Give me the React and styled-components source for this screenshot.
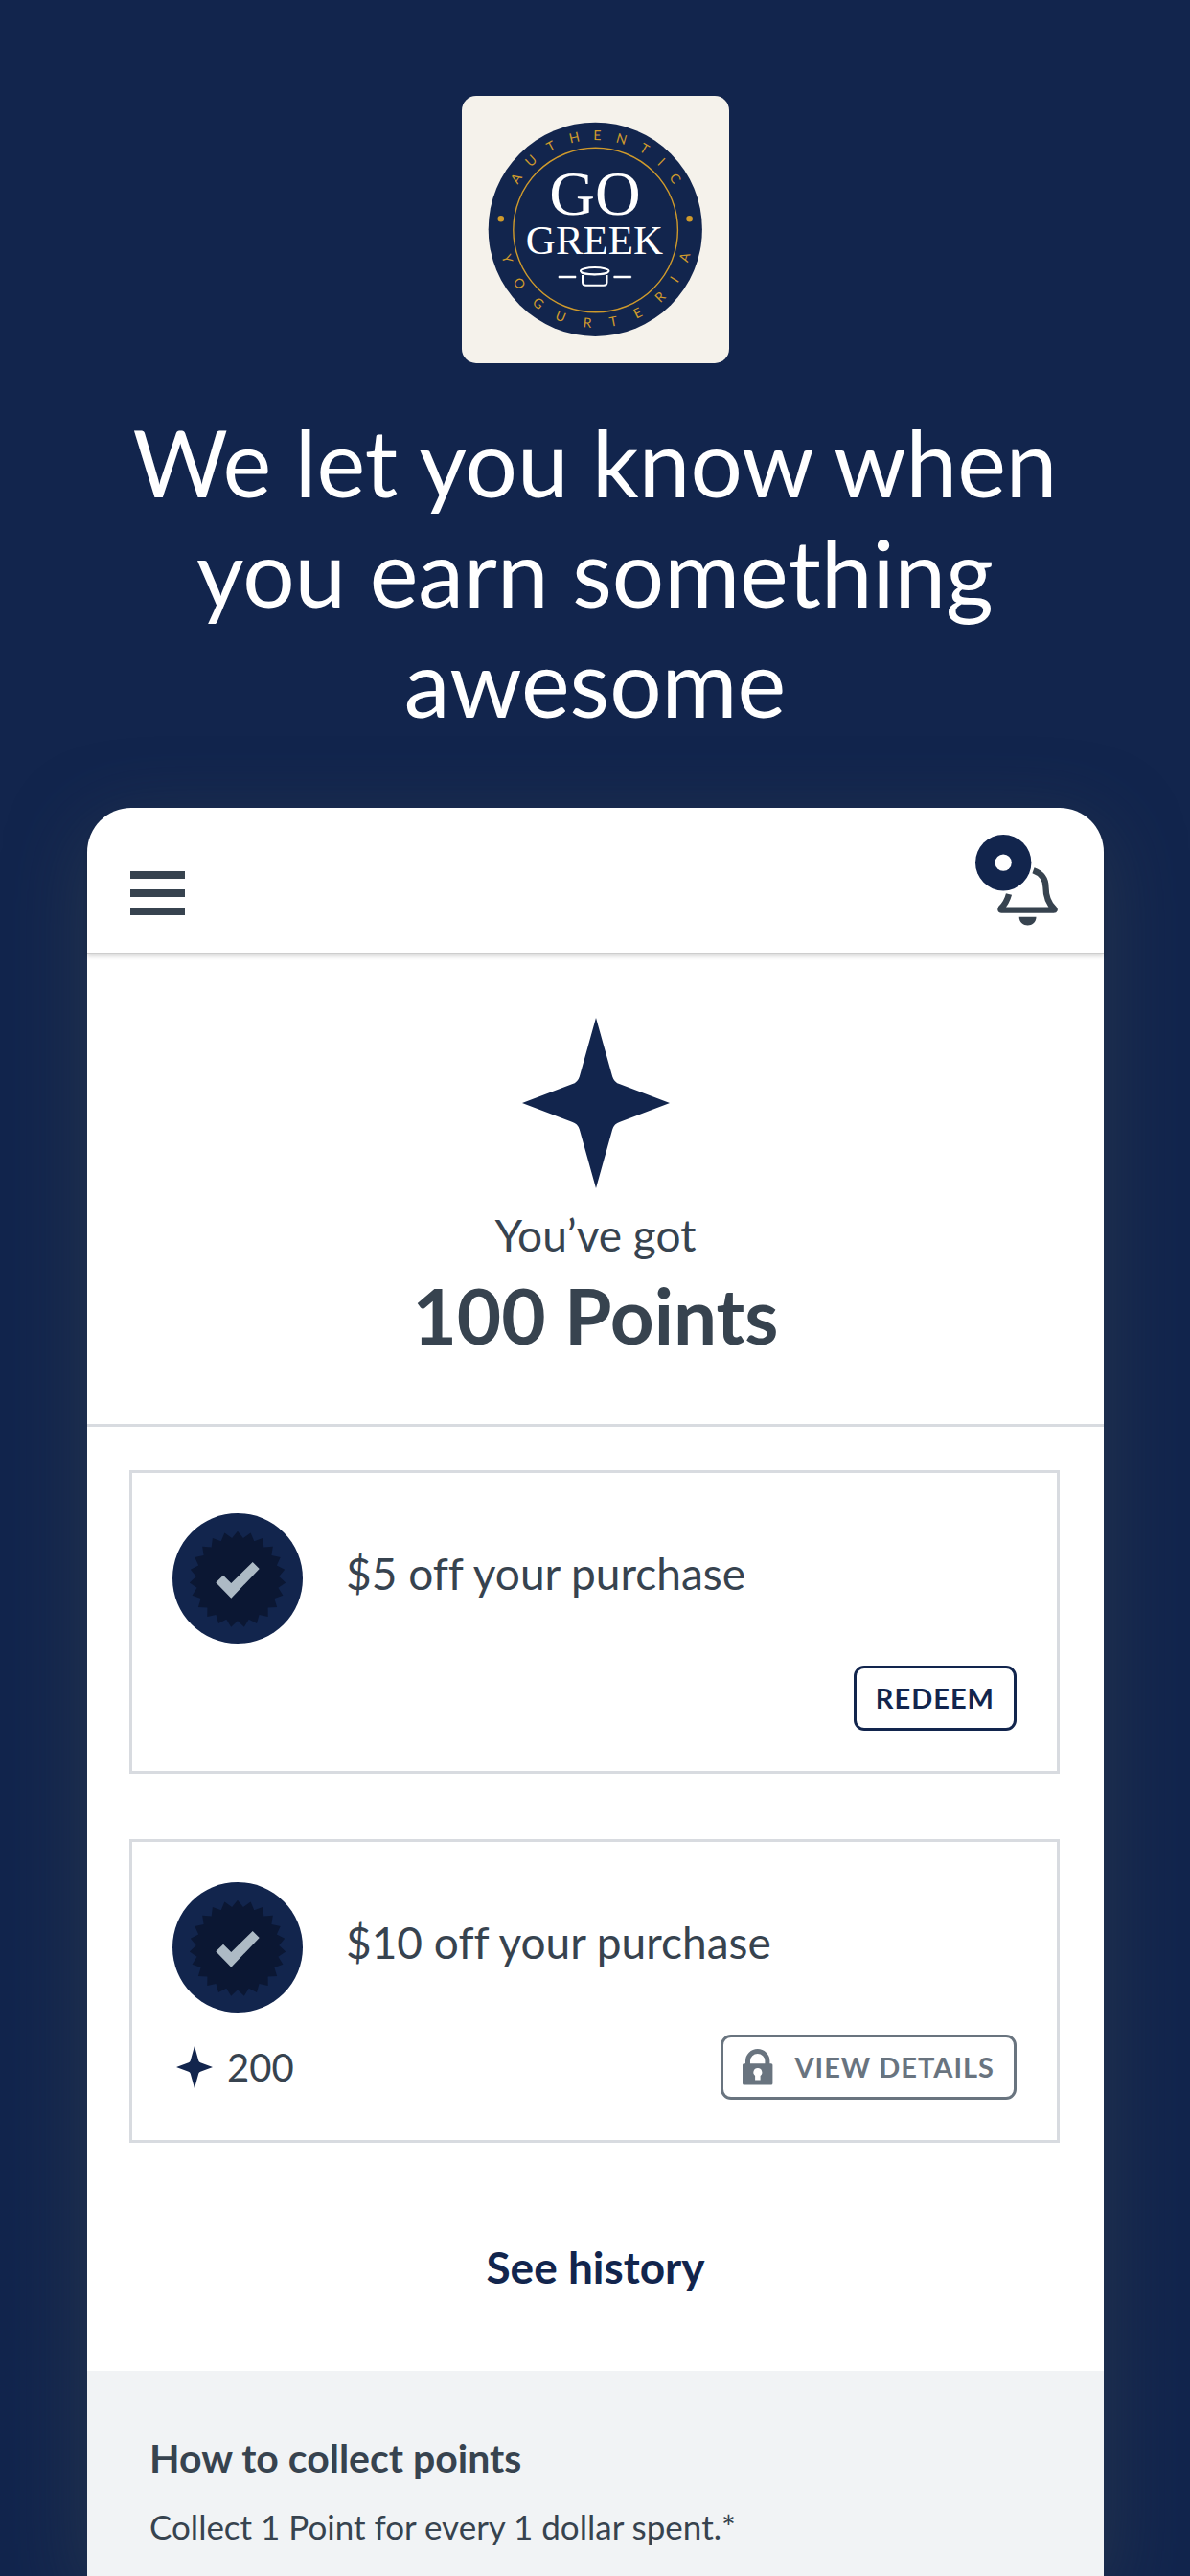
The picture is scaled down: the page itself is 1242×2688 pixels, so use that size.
import React from 'react';
import styled, { createGlobalStyle } from 'styled-components';

const navy = '#12254d';
const slate = '#37434f';
const muted = '#69747f';
const line = '#d8dbe0';
const gold = '#cf9a2c';

const GlobalStyle = createGlobalStyle`
  *,
  *::before,
  *::after {
    box-sizing: border-box;
  }

  body {
    margin: 0;
    background: ${navy};
    color: ${slate};
    font-family: Lato, 'Liberation Sans', sans-serif;
    font-variant-ligatures: none;
  }

  button {
    font-family: inherit;
    cursor: pointer;
  }

  svg {
    display: block;
  }
`;

const Page = styled.div`
  min-height: 100vh;
  display: flex;
  flex-direction: column;
  overflow: hidden;
`;

const Hero = styled.header`
  display: flex;
  flex-direction: column;
  align-items: center;
  padding: 100px 112px 74px;
`;

const LogoTile = styled.div`
  width: 279px;
  height: 279px;
  border-radius: 15px;
  background: #f5f2eb;
`;

const Headline = styled.h1`
  max-width: 1000px;
  margin: 45px 0 0;
  color: #fff;
  font-size: 96px;
  font-weight: 400;
  line-height: 115px;
  text-align: center;
`;

const Phone = styled.main`
  flex: 1;
  display: flex;
  flex-direction: column;
  margin: 0 90px 0 91px;
  border-radius: 46px 46px 0 0;
  background: #fff;
  box-shadow: 0 20px 80px rgba(55, 67, 79, 0.55);
`;

const TopBar = styled.nav`
  display: flex;
  align-items: flex-end;
  justify-content: space-between;
  padding: 28px 48px 28px 45px;
  border-radius: 46px 46px 0 0;
  box-shadow: 0 2px 0 #cdcdcd, 0 4px 4px rgba(0, 0, 0, 0.16);
`;

const IconButton = styled.button`
  padding: 0 0 ${({ $drop }) => $drop || 0}px;
  border: 0;
  background: none;
`;

const Bars = styled.span`
  display: grid;
  gap: 11px;
  width: 57px;

  i {
    height: 8px;
    background: ${slate};
  }
`;

const Balance = styled.section`
  display: flex;
  flex-direction: column;
  align-items: center;
  padding: 68px 45px 66px;
  border-bottom: 3px solid ${line};
`;

const BalanceLabel = styled.p`
  margin: 22px 0 8px;
  font-size: 46px;
  line-height: 54px;
`;

const BalanceValue = styled.h2`
  margin: 0;
  font-size: 80px;
  font-weight: 700;
  line-height: 96px;
`;

const Rewards = styled.ul`
  display: grid;
  gap: 68px;
  margin: 0;
  padding: 45px 46px 0 44px;
  list-style: none;
`;

const Card = styled.li`
  display: grid;
  gap: 23px;
  padding: 42px;
  border: 3px solid ${line};
`;

const CardTop = styled.div`
  display: flex;
  align-items: center;
  gap: 45px;
`;

const CardTitle = styled.h3`
  margin: 0;
  padding-bottom: 10px;
  font-size: 46px;
  font-weight: 400;
  line-height: 54px;
`;

const CardBottom = styled.div`
  display: flex;
  align-items: center;
  justify-content: space-between;
`;

const Cost = styled.span`
  display: flex;
  align-items: center;
  gap: 15px;
  padding-left: 4px;
  font-size: 40px;
  line-height: 48px;
`;

const ActionButton = styled.button`
  display: flex;
  align-items: center;
  gap: 22px;
  height: 68px;
  margin-left: auto;
  padding: 0 20px;
  border: 3px solid ${({ $locked }) => ($locked ? muted : navy)};
  border-radius: 11px;
  background: #fff;
  color: ${({ $locked }) => ($locked ? muted : navy)};
  font-size: 29px;
  font-weight: 700;
  letter-spacing: 1px;
  line-height: 34px;
`;

const HistoryLink = styled.a`
  align-self: center;
  margin: 103px 0 81px;
  color: ${navy};
  font-size: 46px;
  font-weight: 700;
  line-height: 54px;
  text-decoration: none;
`;

const HowTo = styled.section`
  flex: 1;
  padding: 67px 64px 24px 65px;
  background: #f1f3f5;

  h3 {
    margin: 0 0 27px;
    font-size: 41px;
    font-weight: 700;
    line-height: 48px;
  }

  p {
    margin: 0;
    font-size: 35px;
    line-height: 41px;
  }
`;

const topLetters = [
  ['A', -57],
  ['U', -43],
  ['T', -28],
  ['H', -13],
  ['E', 1],
  ['N', 16],
  ['T', 31],
  ['I', 44],
  ['C', 57],
];

const bottomLetters = [
  ['Y', 72],
  ['O', 55],
  ['G', 38],
  ['U', 22],
  ['R', 5],
  ['T', -11],
  ['E', -27],
  ['R', -44],
  ['I', -58],
  ['A', -73],
];

const Logo = () => (
  <svg viewBox="0 0 279 279" width="100%" height="100%" role="img" aria-label="Go Greek">
    <circle cx="139.3" cy="139.3" r="111.6" fill={navy} />
    <circle cx="139.6" cy="140" r="85.8" fill="none" stroke={gold} strokeWidth="1.4" />
    <circle cx="40.8" cy="128.3" r="3.3" fill={gold} />
    <circle cx="237.6" cy="128.3" r="3.3" fill={gold} />
    <g fill={gold} fontFamily="Lato, sans-serif" fontSize="14" textAnchor="middle">
      {topLetters.map(([letter, angle]) => (
        <text key={angle} y="-94" transform={`translate(139.6 140) rotate(${angle})`}>
          {letter}
        </text>
      ))}
      {bottomLetters.map(([letter, angle]) => (
        <text key={angle} y="102" transform={`translate(139.6 140) rotate(${angle})`}>
          {letter}
        </text>
      ))}
    </g>
    <g fill="#fff" fontFamily="'Liberation Serif', serif" textAnchor="middle">
      <text x="139" y="124" fontSize="66">
        GO
      </text>
      <text x="138.5" y="165" fontSize="43">
        GREEK
      </text>
    </g>
    <g fill="none" stroke="#fff" strokeWidth="2">
      <ellipse cx="138.7" cy="182.7" rx="14.8" ry="3.6" />
      <path d="M126 187v7.500q0 3.200 3.500 3.200h18.500q3.500 0 3.500-3.200v-7.500" />
    </g>
    <path
      d="M124 184.500c6 2.500 23 2.500 29 0-2 3.500-27 3.500-29 0zM101 188h18v2h-18zM158.700 188h18v2h-18z"
      fill="#fff"
      stroke="#fff"
      strokeWidth=".5"
    />
  </svg>
);

const Star = ({ width, height }) => (
  <svg viewBox="0 0 154 178" width={width} height={height} fill={navy} aria-hidden="true">
    <path d="M77 0 94.200 61.500Q96 67.500 102 69.300L154 89l-52 19.700Q96 110.500 94.200 116.500L77 178 59.800 116.500Q58 110.500 52 108.700L0 89l52-19.700Q58 67.500 59.800 61.500Z" />
  </svg>
);

const Bell = () => (
  <svg viewBox="0 0 86 95" width="86" height="95" aria-hidden="true">
    <path
      d="M60.500 37.300C69.500 40.500 73.500 47 73.500 55 73.500 66 76.500 72 82.300 77.300Q83.300 78.600 81.800 78.600H27.300Q25.800 78.600 26.800 76.800C31.500 72 33.600 67.500 35 62"
      fill="none"
      stroke={slate}
      strokeWidth="6.300"
      strokeLinejoin="round"
    />
    <path d="M45.700 85.700h17.800c0 11.600-17.800 11.600-17.800 0z" fill={slate} />
    <circle cx="29.200" cy="29.200" r="29.200" fill={navy} />
    <circle cx="29.200" cy="29.200" r="8.600" fill="#fff" />
  </svg>
);

// 23 pointed seal, outer radius 50, inner radius 43
const seal = Array.from({ length: 46 }, (_, i) => {
  const r = i % 2 ? 43.3 : 50.3;
  const a = (i * Math.PI) / 23;
  return `${(68 + r * Math.sin(a)).toFixed(1)},${(69 - r * Math.cos(a)).toFixed(1)}`;
}).join(' ');

const RewardBadge = () => (
  <svg viewBox="0 0 136 136" width="136" height="136" aria-hidden="true">
    <circle cx="68" cy="68" r="68" fill={navy} />
    <polygon points={seal} fill="#0b1733" />
    <path d="M45.300 72.300 53 64.700l8.300 8.300 22.400-22 7 7-29.400 30.700z" fill="#adbac5" />
  </svg>
);

const Lock = () => (
  <svg viewBox="0 0 32 38" width="32" height="38" aria-hidden="true">
    <path d="M5.500 16v-3.500a10.200 10 0 0 1 20.400 0V16" fill="none" stroke="currentColor" strokeWidth="5" />
    <path
      fillRule="evenodd"
      fill="currentColor"
      d="M1.500 15.300h28.400q1.500 0 1.500 1.500v19.100q0 1.500-1.500 1.500H1.500Q0 37.400 0 35.900V16.800q0-1.500 1.500-1.500zM15.700 20a4.400 4.400 0 0 0-2.600 7.900v4.600h5.500v-4.600A4.400 4.400 0 0 0 15.700 20z"
    />
  </svg>
);

const rewards = [
  { title: '$5 off your purchase', cta: 'REDEEM' },
  { title: '$10 off your purchase', cta: 'VIEW DETAILS', cost: 200, locked: true },
];

const Reward = ({ data }) => (
  <Card>
    <CardTop>
      <RewardBadge />
      <CardTitle>{data.title}</CardTitle>
    </CardTop>
    <CardBottom>
      {data.cost && (
        <Cost>
          <Star width={38} height={44} />
          {data.cost}
        </Cost>
      )}
      <ActionButton type="button" $locked={data.locked}>
        {data.locked && <Lock />}
        {data.cta}
      </ActionButton>
    </CardBottom>
  </Card>
);

const App = () => (
  <>
    <GlobalStyle />
    <Page>
      <Hero>
        <LogoTile>
          <Logo />
        </LogoTile>
        <Headline>We let you know when you earn something awesome</Headline>
      </Hero>
      <Phone>
        <TopBar>
          <IconButton type="button" aria-label="Menu" $drop={11}>
            <Bars>
              <i />
              <i />
              <i />
            </Bars>
          </IconButton>
          <IconButton type="button" aria-label="Notifications">
            <Bell />
          </IconButton>
        </TopBar>
        <Balance>
          <Star width={154} height={178} />
          <BalanceLabel>You’ve got</BalanceLabel>
          <BalanceValue>100 Points</BalanceValue>
        </Balance>
        <Rewards>
          {rewards.map((item) => (
            <Reward key={item.title} data={item} />
          ))}
        </Rewards>
        <HistoryLink href="#history">See history</HistoryLink>
        <HowTo>
          <h3>How to collect points</h3>
          <p>Collect 1 Point for every 1 dollar spent.*</p>
        </HowTo>
      </Phone>
    </Page>
  </>
);

export default App;
